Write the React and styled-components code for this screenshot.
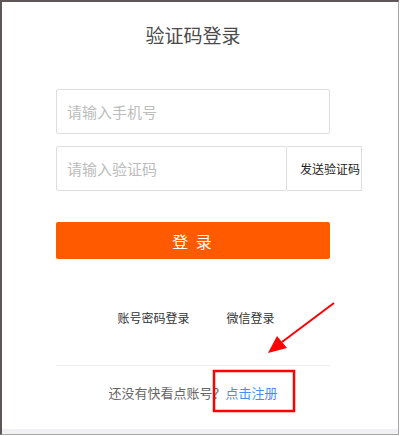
import React from 'react'
import styled, { createGlobalStyle } from 'styled-components'

const GlobalStyle = createGlobalStyle`
  html, body {
    margin: 0;
    padding: 0;
    background: #fff;
  }
  body {
    font-family: "Noto Sans CJK SC", "Noto Sans", sans-serif;
  }
`

const Frame = styled.div`
  position: relative;
  box-sizing: border-box;
  width: 399px;
  height: 435px;
  border-top: 2px solid #5d5757;
  border-left: 2px solid #5d5757;
  border-right: 1px solid #a8a8a8;
  border-bottom: 1px solid #a8a8a8;
  display: flex;
  flex-direction: column;
  overflow: hidden;
`

const Body = styled.div`
  flex: 1;
  padding: 21px 0 0 54px;
`

const Bottom = styled.div`
  height: 5px;
  background: #f1f1f3;
`

const Title = styled.h1`
  width: 274px;
  margin: 0;
  font-size: 19px;
  line-height: 24px;
  font-weight: normal;
  color: #4a4a4a;
  text-align: center;
`

const Form = styled.div`
  width: 274px;
  margin-top: 42px;
  display: flex;
  flex-direction: column;
  gap: 12px;
`

const Input = styled.input`
  box-sizing: border-box;
  height: 45px;
  width: ${p => p.$w || 274}px;
  padding: 0 10px;
  border: 1px solid #dedede;
  border-radius: 2px;
  font-family: inherit;
  font-size: 15px;
  color: #333;
  outline: none;
  &::placeholder {
    color: #bdbdbd;
  }
`

const CodeRow = styled.div`
  display: flex;
  width: 306px;
`

const SendButton = styled.button`
  box-sizing: border-box;
  width: 75px;
  height: 45px;
  padding: 0 0 0 13px;
  border: 1px solid #dedede;
  border-left: none;
  background: #fff;
  font-family: inherit;
  font-size: 12px;
  color: #222;
  text-align: left;
  white-space: nowrap;
`

const LoginButton = styled.button`
  width: 274px;
  height: 37px;
  margin-top: 31px;
  border: none;
  border-radius: 2px;
  background: #ff5a00;
  color: #fff;
  font-family: inherit;
  font-size: 16px;
  letter-spacing: 2px;
`

const Links = styled.div`
  width: 274px;
  margin-top: 50px;
  display: flex;
  justify-content: center;
  gap: 37px;
  padding-left: 6px;
  box-sizing: border-box;
`

const Link = styled.span`
  font-size: 12px;
  line-height: 18px;
  color: #333;
`

const Divider = styled.div`
  width: 274px;
  height: 1px;
  margin-top: 38px;
  background: #eeeeee;
`

const Register = styled.p`
  width: 274px;
  margin: 18px 0 0;
  font-size: 13px;
  line-height: 18px;
  color: #666;
  text-align: center;
`

const Blue = styled.span`
  color: #4a8cf2;
`

const Overlay = styled.svg`
  position: absolute;
  left: -2px;
  top: -2px;
  pointer-events: none;
`

export default function App () {
  return (
    <>
      <GlobalStyle />
      <Frame>
        <Body>
          <Title>验证码登录</Title>
          <Form>
            <Input placeholder='请输入手机号' />
            <CodeRow>
              <Input $w={231} placeholder='请输入验证码' />
              <SendButton>发送验证码</SendButton>
            </CodeRow>
          </Form>
          <LoginButton>登 录</LoginButton>
          <Links>
            <Link>账号密码登录</Link>
            <Link>微信登录</Link>
          </Links>
          <Divider />
          <Register>
            还没有快看点账号？<Blue>点击注册</Blue>
          </Register>
        </Body>
        <Bottom />
        <Overlay width='400' height='436' viewBox='0 0 400 436'>
          <line x1='334' y1='303' x2='282' y2='342' stroke='#f00' strokeWidth='2' />
          <polygon points='268,353 277,336 287,348' fill='#f00' />
          <rect x='214' y='371' width='80' height='40' fill='none' stroke='#f00' strokeWidth='2.5' />
        </Overlay>
      </Frame>
    </>
  )
}
